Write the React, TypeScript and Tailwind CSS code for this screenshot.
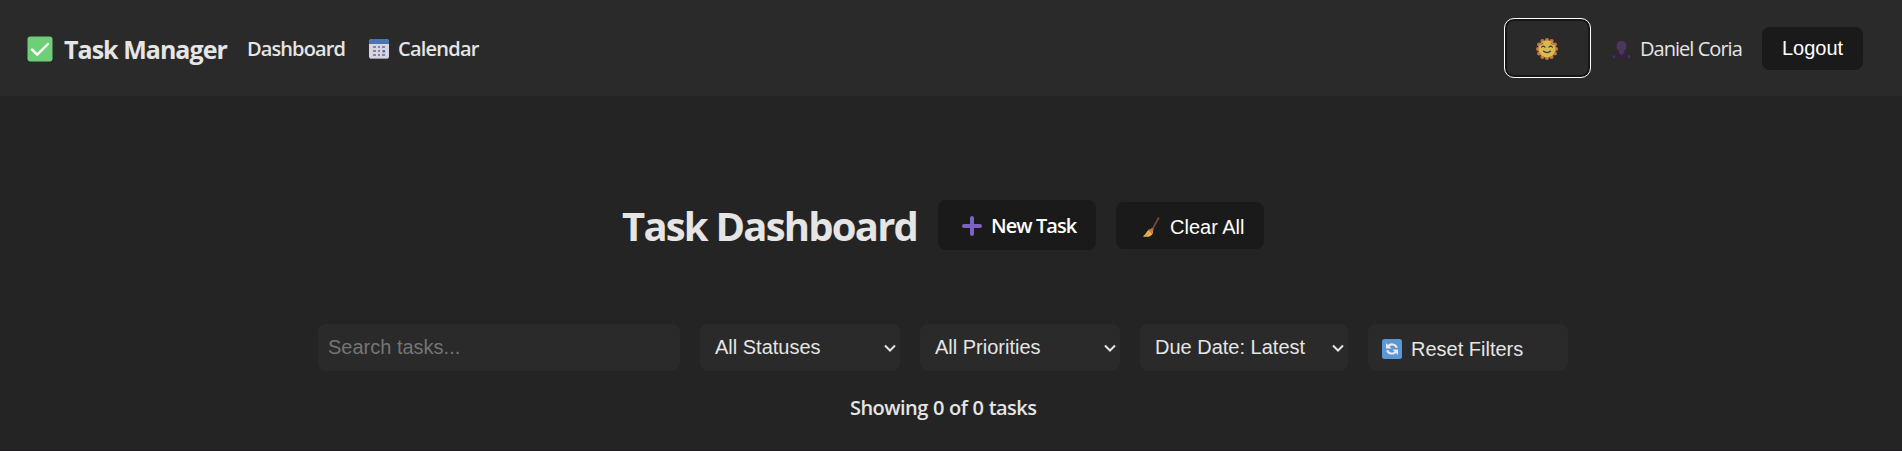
import React from "react";

const ui = "font-['Open_Sans','Noto_Sans',sans-serif]";
const selectBox =
  "flex h-[47px] items-center justify-between rounded-lg bg-[#2a2a2a] pr-[3px] pl-[15px] pb-px text-xl text-[#e5e5e5]";

function CheckIcon() {
  return (
    <svg className="h-[26px] w-[26px]" viewBox="0 0 26 26" aria-hidden="true">
      <rect x="0.5" y="0.5" width="25" height="25" rx="3" fill="#6fcf78" />
      <path d="M5 13.6 10.2 18.6 21 8" fill="none" stroke="#fff" strokeWidth="2.4" strokeLinecap="round" strokeLinejoin="round" />
    </svg>
  );
}

function CalendarIcon() {
  return (
    <svg className="h-5 w-5" viewBox="0 0 20 20" aria-hidden="true">
      <rect width="20" height="20" rx="3" fill="#d9d5e0" />
      <path d="M0 5V3a3 3 0 0 1 3-3h14a3 3 0 0 1 3 3v2z" fill="#4a75b4" />
      <path d="M1.5 19.5h17" stroke="#9c95a8" strokeWidth="1" />
      <g fill="#8d8499">
        <rect x="4" y="7" width="3" height="2" />
        <rect x="9" y="7" width="2" height="2" />
        <rect x="13" y="7" width="3" height="2" />
        <rect x="4" y="11" width="3" height="2" />
        <rect x="9" y="11" width="2" height="2" />
        <rect x="4" y="15" width="3" height="2" />
        <rect x="9" y="15" width="2" height="2" />
        <rect x="13" y="15" width="3" height="2" />
      </g>
      <rect x="13.5" y="11" width="2.5" height="2.4" fill="#2f73cf" />
    </svg>
  );
}

function SunIcon() {
  return (
    <svg className="h-[22px] w-[22px]" viewBox="0 0 22 22" aria-hidden="true">
      <g fill="#c8743c">
        <circle cx="11" cy="11" r="9" />
        <circle cx="11" cy="2" r="2" />
        <circle cx="15.6" cy="3" r="2" />
        <circle cx="19" cy="6.6" r="2" />
        <circle cx="20" cy="11" r="2" />
        <circle cx="19" cy="15.4" r="2" />
        <circle cx="15.6" cy="19" r="2" />
        <circle cx="11" cy="20" r="2" />
        <circle cx="6.4" cy="19" r="2" />
        <circle cx="3" cy="15.4" r="2" />
        <circle cx="2" cy="11" r="2" />
        <circle cx="3" cy="6.6" r="2" />
        <circle cx="6.4" cy="3" r="2" />
      </g>
      <circle cx="11" cy="11" r="8.4" fill="#d6bb50" />
      <g fill="none" stroke="#4b3340" strokeLinecap="round">
        <path d="M5.6 9.2q1.7-2.2 3.4 0M13 9.2q1.7-2.2 3.4 0" strokeWidth="1.1" />
        <path d="M4.8 6.6 7 5.2M17.2 6.6 15 5.2" strokeWidth="0.7" />
        <path d="M7.6 13.3q3.4 2.6 6.8 0" strokeWidth="1.4" />
      </g>
    </svg>
  );
}

function UserIcon() {
  return (
    <svg className="h-[17px] w-[17px]" viewBox="0 0 17 17" aria-hidden="true">
      <path d="M0 17c0-3.2 1.6-5 4.6-5h7.8c3 0 4.6 1.8 4.6 5z" fill="#36203f" />
      <rect x="3.6" y="0" width="9.8" height="10.4" rx="4.6" fill="#4c3660" />
      <path d="M5.8 9h5.400v3L8.500 14.200 5.800 12z" fill="#4c3660" />
      <path d="M0 17c0-1.5.3-2.500 1-3.400L2.400 17zM17 17c0-1.500-.3-2.500-1-3.400L14.600 17z" fill="#4c3660" />
    </svg>
  );
}

function PlusIcon() {
  return (
    <svg className="h-5 w-5" viewBox="0 0 20 20" aria-hidden="true">
      <path d="M10 2v16M2 10h16" stroke="#7b62c3" strokeWidth="4" strokeLinecap="round" />
    </svg>
  );
}

function BroomIcon() {
  return (
    <svg className="h-5 w-[17px]" viewBox="0 0 17 20" aria-hidden="true">
      <path d="M15.6 1 9.5 12" stroke="#754a3c" strokeWidth="1.7" strokeLinecap="round" />
      <path d="M5.5 13c1.4-.9 3-.2 3.900.6 1.100 1.200.8 2.800-.3 3.900-1.400 1.600-3.200 2.300-5 2.300H.6c-.5 0-.5-.8 0-1.100 2.300-1.300 2.800-4.300 4.900-5.700z" fill="#eab54e" />
      <path d="M5.2 13.2c1.8.2 3.5 1.600 4 3.400" stroke="#d2643a" strokeWidth="1.3" fill="none" />
      <path d="M6.8 12.6 8.900 10.800l1.900 1.200-.8 2.600z" fill="#a06f58" />
      <path d="M2 19.4c2-1 3-2.200 3.600-3.600" stroke="#b98339" strokeWidth="0.8" fill="none" />
    </svg>
  );
}

function ResetIcon() {
  return (
    <svg className="h-5 w-5" viewBox="0 0 20 20" aria-hidden="true">
      <rect width="20" height="20" rx="2.5" fill="#5a97d4" />
      <g fill="none" stroke="#e8e8ea" strokeWidth="2.2">
        <path d="M6 7.4C8 4.7 13.5 4.5 14.8 8.8" />
        <path d="M14 12.6C12 15.3 6.5 15.5 5.2 11.2" />
      </g>
      <path d="M4 4v5.6h5.6zM16 16v-5.600h-5.600z" fill="#e8e8ea" />
    </svg>
  );
}

function Chevron() {
  return (
    <svg className="mt-[2px] h-[10px] w-[14px]" viewBox="0 0 14 10" aria-hidden="true">
      <path d="M2 2.500 7 7.500 12 2.500" fill="none" stroke="#e5e5e5" strokeWidth="2" />
    </svg>
  );
}

function Select({ label, width }: { label: string; width: string }) {
  return (
    <button type="button" className={`${selectBox} ${width}`}>
      <span>{label}</span>
      <Chevron />
    </button>
  );
}

export default function App() {
  return (
    <div className="h-[451px] overflow-hidden border-b border-[#1e191e] bg-[#242424] font-['Liberation_Sans',Arial,sans-serif] text-[#e5e5e5]">
      <header className="flex h-24 items-center justify-between bg-[#2a2a2a] pr-[39px] pl-[27px]">
        <nav className={`flex items-center pt-[2px] whitespace-nowrap ${ui}`}>
          <CheckIcon />
          <span className="ml-[11px] w-[183px] text-[25px] leading-8 font-bold tracking-[-0.97px]">Task Manager</span>
          <a className="w-[122px] text-xl leading-7 font-semibold tracking-[-0.9px]">Dashboard</a>
          <CalendarIcon />
          <a className="ml-[9px] text-xl leading-7 font-semibold tracking-[-0.77px]">Calendar</a>
        </nav>
        <div className="flex items-center whitespace-nowrap">
          <button type="button" className="mr-[22px] flex h-[60px] w-[87px] items-center justify-center rounded-[10px] border border-white pt-[2px] pr-px ring-2 ring-[#161616] ring-inset">
            <SunIcon />
          </button>
          <div className="flex items-center pt-[3px]">
            <UserIcon />
          </div>
          <span className={`ml-[10px] w-[122px] pt-[2px] text-xl leading-7 tracking-[-0.96px] ${ui}`}>Daniel Coria</span>
          <button type="button" className="mt-px h-[43px] w-[101px] rounded-lg bg-[#1a1a1a] pb-px text-xl text-white">Logout</button>
        </div>
      </header>
      <main>
        <div className="mt-[104px] flex h-[50px] items-center pl-[622px] whitespace-nowrap">
          <h1 className={`w-[316px] pt-[2px] text-[40px] leading-[50px] font-bold tracking-[-1.78px] ${ui}`}>Task Dashboard</h1>
          <button type="button" className={`mr-5 flex h-[50px] w-[158px] items-center rounded-lg bg-[#1a1a1a] pt-[2px] pl-6 text-xl font-semibold tracking-[-0.95px] text-white ${ui}`}>
            <PlusIcon />
            <span className="ml-[9px]">New Task</span>
          </button>
          <button type="button" className="mt-px flex h-[47px] w-[148px] items-center rounded-lg bg-[#1a1a1a] pt-[3px] pl-[27px] text-xl text-white">
            <BroomIcon />
            <span className="ml-[10px]">Clear All</span>
          </button>
        </div>
        <div className="mt-[74px] flex gap-5 pl-[318px] whitespace-nowrap">
          <input
            type="text"
            placeholder="Search tasks..."
            className="h-[47px] w-[362px] rounded-lg bg-[#2a2a2a] pb-px pl-[10px] text-xl outline-none placeholder:text-[#757575]"
          />
          <Select label="All Statuses" width="w-[200px]" />
          <Select label="All Priorities" width="w-[200px]" />
          <Select label="Due Date: Latest" width="w-[208px]" />
          <button type="button" className="flex h-[47px] w-[200px] items-center rounded-lg bg-[#2a2a2a] pt-[3px] pl-[14px] text-xl">
            <ResetIcon />
            <span className="ml-[9px]">Reset Filters</span>
          </button>
        </div>
        <p className={`mt-[23px] pl-[850px] text-xl leading-7 font-semibold tracking-[-0.56px] [word-spacing:0.6px] whitespace-nowrap ${ui}`}>Showing 0 of 0 tasks</p>
      </main>
    </div>
  );
}
